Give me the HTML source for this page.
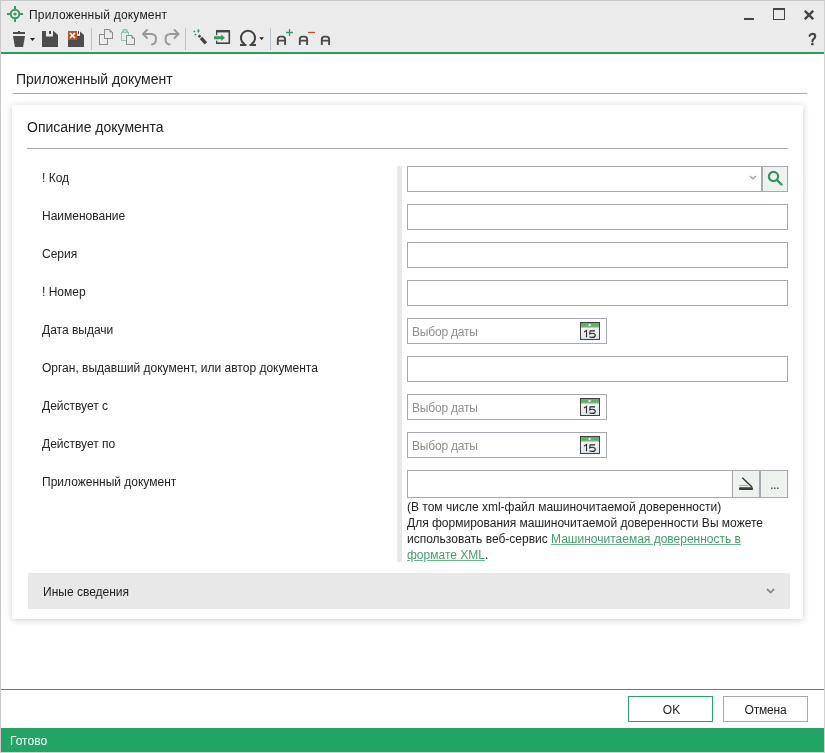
<!DOCTYPE html>
<html><head><meta charset="utf-8">
<style>
*{box-sizing:border-box;margin:0;padding:0}
html,body{width:825px;height:753px;overflow:hidden;background:#fff}
body>*{will-change:transform}
body{font-family:"Liberation Sans",sans-serif;color:#222;position:relative}
.a{position:absolute}
.t{position:absolute;white-space:nowrap;font-size:12px;line-height:14px}
#win{position:absolute;left:0;top:0;width:825px;height:753px;border:1px solid #c9c9c9;border-right-color:#d2d0d1;border-bottom-color:#d6d3d5}
#tb{position:absolute;left:1px;top:1px;width:823px;height:51px;background:#ebebeb}
#gl{position:absolute;left:1px;top:52px;width:823px;height:2px;background:#20a260}
.sep{position:absolute;top:28px;width:1px;height:22px;background:#bcc3cc}
.inp{position:absolute;left:407px;width:381px;height:26px;border:1px solid #a8a8b0;background:#fff}
.date{position:absolute;left:407px;width:200px;height:26px;border:1px solid #a8a8b0;background:#fff}
.lbl{position:absolute;left:42px;font-size:12px;line-height:14px;color:#222;white-space:nowrap}
.ph{position:absolute;left:4px;top:6px;font-size:12px;line-height:14px;color:#8f8f8f;white-space:nowrap;letter-spacing:-0.2px}
.cal{position:absolute;left:172px;top:3px;width:20px;height:18px}
.btn{position:absolute;top:696px;width:85px;height:26px;border:1px solid #a9a9b1;background:#fff;font-size:12px;line-height:26px;text-align:center;color:#222}
</style></head><body>
<div id="win"></div>
<div id="tb"></div>
<div id="gl"></div>

<!-- title icon -->
<svg class="a" style="left:7px;top:6px" width="16" height="16" viewBox="0 0 16 16">
  <g fill="none" stroke="#3a9a66" stroke-width="2">
    <circle cx="8" cy="8" r="4.3"/>
    <line x1="8" y1="0" x2="8" y2="3.5"/><line x1="8" y1="12.5" x2="8" y2="16"/>
    <line x1="0" y1="8" x2="3.5" y2="8"/><line x1="12.5" y1="8" x2="16" y2="8"/>
  </g>
  <circle cx="8" cy="8" r="1.6" fill="#3a9a66"/>
</svg>
<div class="t" style="left:29px;top:8px;font-size:12px;color:#222;letter-spacing:0.2px">Приложенный документ</div>

<!-- window controls -->
<div class="a" style="left:744px;top:18px;width:10px;height:2px;background:#444"></div>
<div class="a" style="left:773px;top:8px;width:12px;height:12px;border:1px solid #444;border-top-width:2px"></div>
<svg class="a" style="left:804px;top:10px" width="10" height="10" viewBox="0 0 10 10"><path d="M0.8 0.8L9.2 9.2M9.2 0.8L0.8 9.2" stroke="#464646" stroke-width="2.4"/></svg>
<svg class="a" style="left:806px;top:30px" width="14" height="18" viewBox="0 0 14 18"><path d="M3.5 5.9Q4.3 3.9 6.6 3.9Q9.2 3.9 9.2 6.3Q9.2 7.8 7.7 8.9Q6.4 9.9 6.4 11.4" fill="none" stroke="#454545" stroke-width="2.1" stroke-linecap="round"/><rect x="5.1" y="13" width="2.5" height="2.3" rx="0.6" fill="#454545"/></svg>

<!-- toolbar -->
<svg class="a" style="left:0;top:0" width="340" height="52" viewBox="0 0 340 52">
  <!-- trash -->
  <rect x="13" y="32" width="12" height="2" fill="#4d4d4d"/>
  <rect x="18" y="31" width="2" height="1" fill="#4d4d4d"/>
  <path d="M13 36H25L23.1 47H14.9Z" fill="#4d4d4d"/>
  <path d="M30 38H35L32.5 41Z" fill="#222"/>
  <!-- save -->
  <path d="M42 31H53.5L58 35V47H42Z" fill="#4d4d4d"/>
  <rect x="46" y="31" width="7" height="5.5" fill="#ebebeb"/>
  <rect x="49" y="31" width="2" height="3" fill="#4d4d4d"/>
  <!-- save close -->
  <path d="M68 31H79.5L84 35V47H68Z" fill="#4d4d4d"/>
  <rect x="77" y="31" width="3" height="5" fill="#ebebeb"/>
  <rect x="78" y="31" width="1" height="3" fill="#4d4d4d"/>
  <rect x="68" y="31" width="9" height="9" fill="#c1522f"/>
  <path d="M70 33L75 38M75 33L70 38" stroke="#fff" stroke-width="1.6"/>
  <!-- copy -->
  <g fill="#8c8c8c" shape-rendering="crispEdges">
    <rect x="104" y="29" width="1" height="10"/><rect x="104" y="29" width="6" height="1"/>
    <rect x="112" y="32" width="1" height="7"/><rect x="104" y="38" width="9" height="1"/>
    <rect x="99" y="34" width="5" height="1"/><rect x="99" y="34" width="1" height="11"/>
    <rect x="99" y="44" width="9" height="1"/><rect x="107" y="39" width="1" height="6"/>
  </g>
  <path d="M109.5 29L113 32.5H109.5Z" fill="#8c8c8c"/>
  <!-- paste -->
  <g fill="#8fc5a6" shape-rendering="crispEdges">
    <rect x="121" y="32" width="1" height="9"/><rect x="121" y="40" width="5" height="1"/>
    <rect x="128" y="32" width="1" height="3"/><rect x="121" y="32" width="8" height="1"/>
  </g>
  <path d="M123.2 29H126.8L128.6 32.4H121.4Z" fill="#8fc5a6"/>
  <rect x="124" y="30.3" width="2" height="1.4" fill="#d8e8de"/>
  <g fill="#8c8c8c" shape-rendering="crispEdges">
    <rect x="126" y="35" width="6" height="1"/><rect x="134" y="38" width="1" height="7"/>
    <rect x="126" y="35" width="1" height="10"/><rect x="126" y="44" width="9" height="1"/>
  </g>
  <path d="M131.5 35L135 38.5H131.5Z" fill="#8c8c8c"/>
  <!-- undo -->
  <g fill="none" stroke="#999" stroke-width="2" stroke-linecap="round" stroke-linejoin="round">
    <path d="M143.5 34H151Q156 34 156 39Q156 44 152 44.5"/>
    <path d="M147 30L143 34L147 38"/>
    <path d="M178 34H170.5Q165.5 34 165.5 39Q165.5 44 169.5 44.5"/>
    <path d="M174.5 30L178.5 34L174.5 38"/>
  </g>
  <!-- wand -->
  <path d="M198.6 35.4L200.3 37.1" stroke="#484848" stroke-width="2.6"/>
  <path d="M201 37.9L205.9 43.4" stroke="#444" stroke-width="3.3"/>
  <g fill="#3a9a66">
    <path d="M198.4 28.8L199.7 30.9L198.4 33L197.1 30.9Z"/>
    <path d="M194.3 30.2L195.5 31.4L194.3 32.6L193.1 31.4Z"/>
    <path d="M195.4 33.4L196.6 34.6L195.4 35.8L194.2 34.6Z"/>
  </g>
  <!-- import -->
  <rect x="216" y="30" width="14" height="2.4" fill="#444"/>
  <rect x="228.5" y="30" width="1.6" height="14" fill="#444"/>
  <rect x="216" y="42.4" width="14" height="1.6" fill="#444"/>
  <rect x="216" y="30" width="1.3" height="5.2" fill="#444"/>
  <rect x="216" y="40.6" width="1.3" height="3.4" fill="#444"/>
  <path d="M214 36.2H221.2V34.5L225 37.7L221.2 41.1V39.2H214Z" fill="#3a9a66"/>
  <!-- omega -->
  <path d="M244.6 44.2A7.1 7.1 0 1 1 251.4 44.2" fill="none" stroke="#444" stroke-width="2"/>
  <rect x="240" y="44" width="6.5" height="2" fill="#444"/>
  <rect x="249.5" y="44" width="6.5" height="2" fill="#444"/>
  <path d="M259.2 37.2H264L261.6 40Z" fill="#222"/>
  <!-- A+ A- A -->
  <g fill="none" stroke="#4a4a4a" stroke-width="1.9">
    <path d="M277.8 45V39.2Q277.8 36.6 280.4 36.6H282.5Q285.1 36.6 285.1 39.2V45M277.8 40.6H285.1"/>
    <path d="M299.8 45V39.2Q299.8 36.6 302.4 36.6H304.5Q307.1 36.6 307.1 39.2V45M299.8 40.6H307.1"/>
    <path d="M321.8 45V39.2Q321.8 36.6 324.4 36.6H326.5Q329.1 36.6 329.1 39.2V45M321.8 40.6H329.1"/>
  </g>
  <path d="M286 32.5H293M289.5 29V36" stroke="#3a9868" stroke-width="1.3"/>
  <path d="M308 32.5H315" stroke="#c0502d" stroke-width="1.3"/>
</svg>
<div class="sep" style="left:91px"></div>
<div class="sep" style="left:185px"></div>
<div class="sep" style="left:270px"></div>

<!-- header -->
<div class="t" style="left:16px;top:71px;font-size:14px;line-height:16px;color:#222">Приложенный документ</div>
<div class="a" style="left:13px;top:93px;width:794px;height:1px;background:#a8a8b0"></div>

<!-- card -->
<div class="a" style="left:12px;top:105px;width:791px;height:514px;background:#fff;border-radius:2px;box-shadow:0 1px 7px rgba(0,0,0,0.2)"></div>
<div class="t" style="left:27px;top:119px;font-size:14px;line-height:16px;color:#222">Описание документа</div>
<div class="a" style="left:27px;top:148px;width:761px;height:1px;background:#a8a8b0"></div>

<div class="a" style="left:397px;top:166px;width:5px;height:396px;background:#e8e8e8"></div>

<div class="lbl" style="top:171px">! Код</div>
<div class="lbl" style="top:209px">Наименование</div>
<div class="lbl" style="top:247px">Серия</div>
<div class="lbl" style="top:285px">! Номер</div>
<div class="lbl" style="top:323px">Дата выдачи</div>
<div class="lbl" style="top:361px">Орган, выдавший документ, или автор документа</div>
<div class="lbl" style="top:399px">Действует с</div>
<div class="lbl" style="top:437px">Действует по</div>
<div class="lbl" style="top:475px">Приложенный документ</div>

<!-- inputs -->
<div class="inp" style="top:166px;width:355px"></div>
<div class="a" style="left:762px;top:166px;width:26px;height:26px;border:1px solid #a8a8b0;background:#edf2ef"></div>
<div class="inp" style="top:204px"></div>
<div class="inp" style="top:242px"></div>
<div class="inp" style="top:280px"></div>
<div class="date" style="top:318px"><div class="ph">Выбор даты</div><svg class="cal" width="20" height="18" viewBox="0 0 20 18"><defs><linearGradient id="cg" x1="0" y1="0" x2="0" y2="1"><stop offset="0" stop-color="#fff"/><stop offset="1" stop-color="#dde3ea"/></linearGradient></defs><rect x="0.5" y="0.5" width="19" height="17" fill="url(#cg)" stroke="#404040"/><rect x="1" y="1" width="18" height="3.8" fill="#5db35f"/><rect x="1" y="4.8" width="18" height="0.6" fill="#7a7a7a"/><circle cx="9.6" cy="2.9" r="1.1" fill="#fff"/><path d="M4 10L6.5 8.4V15.3M15 8.9H10.1L9.7 11.9C10.3 11.5 11.2 11.3 12.1 11.3C14.1 11.3 15.3 12.2 15.3 13.4C15.3 14.6 14.1 15.4 12.2 15.4C11.1 15.4 10.2 15.1 9.5 14.7" fill="none" stroke="#2a2a2a" stroke-width="1.1"/></svg></div>
<div class="inp" style="top:356px"></div>
<div class="date" style="top:394px"><div class="ph">Выбор даты</div><svg class="cal" width="20" height="18" viewBox="0 0 20 18"><defs><linearGradient id="cg" x1="0" y1="0" x2="0" y2="1"><stop offset="0" stop-color="#fff"/><stop offset="1" stop-color="#dde3ea"/></linearGradient></defs><rect x="0.5" y="0.5" width="19" height="17" fill="url(#cg)" stroke="#404040"/><rect x="1" y="1" width="18" height="3.8" fill="#5db35f"/><rect x="1" y="4.8" width="18" height="0.6" fill="#7a7a7a"/><circle cx="9.6" cy="2.9" r="1.1" fill="#fff"/><path d="M4 10L6.5 8.4V15.3M15 8.9H10.1L9.7 11.9C10.3 11.5 11.2 11.3 12.1 11.3C14.1 11.3 15.3 12.2 15.3 13.4C15.3 14.6 14.1 15.4 12.2 15.4C11.1 15.4 10.2 15.1 9.5 14.7" fill="none" stroke="#2a2a2a" stroke-width="1.1"/></svg></div>
<div class="date" style="top:432px"><div class="ph">Выбор даты</div><svg class="cal" width="20" height="18" viewBox="0 0 20 18"><defs><linearGradient id="cg" x1="0" y1="0" x2="0" y2="1"><stop offset="0" stop-color="#fff"/><stop offset="1" stop-color="#dde3ea"/></linearGradient></defs><rect x="0.5" y="0.5" width="19" height="17" fill="url(#cg)" stroke="#404040"/><rect x="1" y="1" width="18" height="3.8" fill="#5db35f"/><rect x="1" y="4.8" width="18" height="0.6" fill="#7a7a7a"/><circle cx="9.6" cy="2.9" r="1.1" fill="#fff"/><path d="M4 10L6.5 8.4V15.3M15 8.9H10.1L9.7 11.9C10.3 11.5 11.2 11.3 12.1 11.3C14.1 11.3 15.3 12.2 15.3 13.4C15.3 14.6 14.1 15.4 12.2 15.4C11.1 15.4 10.2 15.1 9.5 14.7" fill="none" stroke="#2a2a2a" stroke-width="1.1"/></svg></div>
<div class="inp" style="top:470px;width:326px;height:28px"></div>
<div class="a" style="left:732px;top:470px;width:28px;height:28px;border:1px solid #a8a8b0;background:#edf2ef"></div>
<div class="a" style="left:760px;top:470px;width:28px;height:28px;border:1px solid #a8a8b0;background:#edf2ef"></div>
<div class="t" style="left:407px;top:500px">(В том числе xml-файл машиночитаемой доверенности)</div>
<div class="t" style="left:407px;top:516px">Для формирования машиночитаемой доверенности Вы можете</div>
<div class="t" style="left:407px;top:532px">использовать веб-сервис <span style="color:#439c6e;text-decoration:underline;text-decoration-color:#6cb08c">Машиночитаемая доверенность в</span></div>
<div class="t" style="left:407px;top:548px"><span style="color:#439c6e;text-decoration:underline;text-decoration-color:#6cb08c">формате XML</span>.</div>


<svg class="a" style="left:749px;top:175px" width="8" height="6" viewBox="0 0 8 6"><path d="M1 1L4 4L7 1" fill="none" stroke="#9a9a9a" stroke-width="1.1"/></svg>
<svg class="a" style="left:766px;top:169px" width="18" height="18" viewBox="0 0 18 18"><circle cx="7.5" cy="7.5" r="4.6" fill="none" stroke="#3a9264" stroke-width="2.2"/><path d="M10.8 10.8L15.5 15.5" stroke="#3a9264" stroke-width="2.4" stroke-linecap="round"/></svg>
<svg class="a" style="left:736px;top:475px" width="20" height="18" viewBox="0 0 20 18"><path d="M6.3 2.8L16 12" stroke="#3a3a3a" stroke-width="1.5"/><rect x="3.2" y="10" width="9" height="1.1" fill="#86c4a0"/><rect x="3" y="12.2" width="14" height="2.8" rx="0.8" fill="#3a3a3a"/></svg>
<svg class="a" style="left:770px;top:485.5px" width="10" height="4" viewBox="0 0 10 4"><rect x="1" y="1.5" width="1.5" height="1.5" fill="#555"/><rect x="4" y="1.5" width="1.5" height="1.5" fill="#555"/><rect x="7" y="1.5" width="1.5" height="1.5" fill="#555"/></svg>
<!-- other info -->
<div class="a" style="left:28px;top:573px;width:762px;height:36px;background:#e8e8e8"></div>
<div class="t" style="left:43px;top:585px">Иные сведения</div>
<svg class="a" style="left:765px;top:587px" width="11" height="8" viewBox="0 0 11 8"><path d="M2 2L5.6 5.6L9.2 2" fill="none" stroke="#888" stroke-width="1.8"/></svg>


<!-- bottom -->
<div class="a" style="left:1px;top:689px;width:823px;height:1px;background:#2aa06a"></div>
<div class="btn" style="left:628px;border-color:#2aa06a;padding-left:2px">OK</div>
<div class="btn" style="left:723px;letter-spacing:-0.2px">Отмена</div>
<div class="a" style="left:1px;top:728px;width:823px;height:24px;background:#22a564"></div>
<div class="t" style="left:9.5px;top:734px;color:#fff">Готово</div>
</body></html>
